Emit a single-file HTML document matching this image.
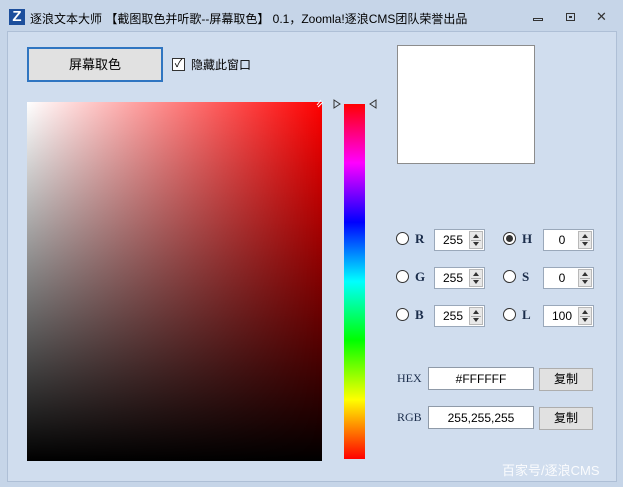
<!DOCTYPE html><html><head><meta charset="utf-8"><style>
*{margin:0;padding:0;box-sizing:border-box}
body{width:623px;height:487px;background:#c6d5e8;font-family:"Liberation Sans","Noto Sans CJK SC",sans-serif;position:relative;overflow:hidden;font-size:12px;color:#000}
.a{position:absolute}
#client{left:7px;top:31px;width:610px;height:451px;background:#d0ddee;border:1px solid #aebfd6}
.sp{background:#fff;border:1px solid #9aa8ba;height:22px;width:51px}
.sp span{position:absolute;left:4px;top:3px;width:28px;text-align:center;font-size:12px}
.sp i{position:absolute;right:1px;top:1px;width:14px;height:18px;background:#e8e8e8;border:1px solid #b8b8b8}
.sp i:before{content:"";position:absolute;left:3px;top:2px;border:3px solid transparent;border-bottom:4px solid #333;border-top:0}
.sp i:after{content:"";position:absolute;left:3px;bottom:2px;border:3px solid transparent;border-top:4px solid #333;border-bottom:0}
.sp i b{position:absolute;left:1px;right:1px;top:8px;border-top:1px solid #aaa}
.rd{width:13px;height:13px;border-radius:50%;border:1px solid #333;background:#fff}
.lb{font-family:"Liberation Serif","Noto Serif CJK SC",serif;font-weight:bold;color:#1a2c4a;font-size:13px}
.btn{background:#e1e1e1;border:1px solid #adadad;text-align:center;font-size:12px}
.tx{background:#fff;border:1px solid #8f9aa8;text-align:center;font-size:12px;padding-top:4px}
</style></head><body>
<div class="a" style="left:9px;top:9px;width:16px;height:16px;background:#1d4f9c;color:#fff;font-weight:bold;font-size:15px;line-height:16px;text-align:center">Z</div>
<div class="a" style="left:30px;top:10px;font-size:12px">逐浪文本大师 【截图取色并听歌--屏幕取色】 0.1，Zoomla!逐浪CMS团队荣誉出品</div>
<div class="a" style="left:533px;top:18px;width:10px;height:3px;border:1px solid #333"></div>
<div class="a" style="left:566px;top:13px;width:9px;height:8px;border:1px solid #333"><div style="margin:2px;width:3px;height:2px;border:1px solid #333"></div></div>
<div class="a" style="left:596px;top:9px;font-size:13px;color:#333">✕</div>
<div class="a" id="client"></div>
<div class="a btn" style="left:27px;top:47px;width:136px;height:35px;border:2px solid #2f75c1;line-height:31px;font-size:13px">屏幕取色</div>
<div class="a" style="left:172px;top:58px;width:13px;height:13px;border:1px solid #333;background:#fff;font-size:11px;line-height:11px;text-align:center">✓</div>
<div class="a" style="left:191px;top:56px;font-size:12px">隐藏此窗口</div>
<div class="a" style="left:397px;top:45px;width:138px;height:119px;background:#fff;border:1px solid #8c8c8c"></div>
<div class="a" style="left:27px;top:102px;width:295px;height:359px;background:linear-gradient(to bottom,rgba(0,0,0,0),#000),linear-gradient(to right,#fff,#f00)"></div>
<div class="a" style="left:344px;top:104px;width:21px;height:355px;background:linear-gradient(to bottom,#f00,#f0f 16.6%,#00f 33.3%,#0ff 50%,#0f0 66.6%,#ff0 83.3%,#f00)"></div>
<svg class="a" style="left:315px;top:97px" width="65" height="16"><path d="M2 8 L6 3 M3 10 L8 5" stroke="#fff" fill="none"/><path d="M19 3 L25 7 L19 11 Z" stroke="#333" fill="#d0ddee"/><path d="M61 3 L55 7 L61 11 Z" stroke="#333" fill="#d0ddee"/></svg>
<div class="a rd" style="left:396px;top:232px"></div><div class="a lb" style="left:415px;top:231px">R</div>
<div class="a sp" style="left:434px;top:229px"><span>255</span><i><b></b></i></div>
<div class="a rd" style="left:503px;top:232px"><div style="margin:2px;width:7px;height:7px;border-radius:50%;background:#333"></div></div><div class="a lb" style="left:522px;top:231px">H</div>
<div class="a sp" style="left:543px;top:229px"><span>0</span><i><b></b></i></div>
<div class="a rd" style="left:396px;top:270px"></div><div class="a lb" style="left:415px;top:269px">G</div>
<div class="a sp" style="left:434px;top:267px"><span>255</span><i><b></b></i></div>
<div class="a rd" style="left:503px;top:270px"></div><div class="a lb" style="left:522px;top:269px">S</div>
<div class="a sp" style="left:543px;top:267px"><span>0</span><i><b></b></i></div>
<div class="a rd" style="left:396px;top:308px"></div><div class="a lb" style="left:415px;top:307px">B</div>
<div class="a sp" style="left:434px;top:305px"><span>255</span><i><b></b></i></div>
<div class="a rd" style="left:503px;top:308px"></div><div class="a lb" style="left:522px;top:307px">L</div>
<div class="a sp" style="left:543px;top:305px"><span>100</span><i><b></b></i></div>
<div class="a" style="left:397px;top:371px;font-family:'Liberation Serif',serif;color:#1a2c4a;font-size:12px">HEX</div>
<div class="a tx" style="left:428px;top:367px;width:106px;height:23px">#FFFFFF</div>
<div class="a btn" style="left:539px;top:368px;width:54px;height:23px;line-height:21px">复制</div>
<div class="a" style="left:397px;top:410px;font-family:'Liberation Serif',serif;color:#1a2c4a;font-size:12px">RGB</div>
<div class="a tx" style="left:428px;top:406px;width:106px;height:23px">255,255,255</div>
<div class="a btn" style="left:539px;top:407px;width:54px;height:23px;line-height:21px">复制</div>
<div class="a" style="left:502px;top:460px;color:#fff;font-size:13px;opacity:.9">百家号/逐浪CMS</div>
</body></html>
